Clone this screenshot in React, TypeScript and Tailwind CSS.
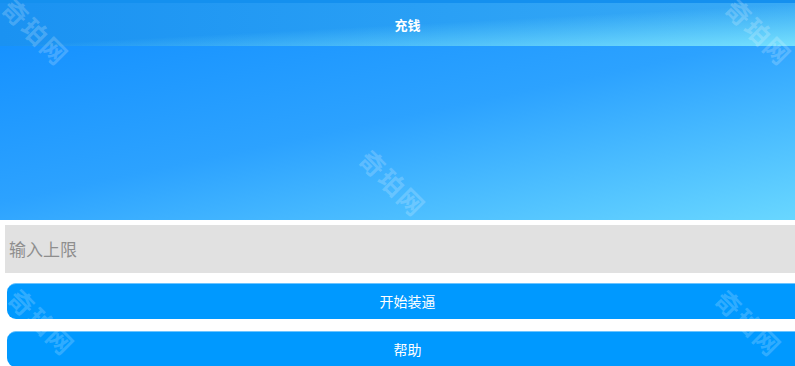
import React from 'react';

const cjk = "font-['Noto_Sans_CJK_SC','Noto_Sans',sans-serif]";

// faint diagonal watermark stamped over the screenshot
const Mark = ({ x, y }: { x: number; y: number }) => (
  <div
    className={`absolute pointer-events-none -translate-x-1/2 -translate-y-1/2 rotate-45 text-[25px] font-bold tracking-[2px] text-white/20 whitespace-nowrap ${cjk}`}
    style={{ left: x, top: y }}
  >
    奇珀网
  </div>
);

export default function App() {
  return (
    <div className={`relative w-full h-[366px] overflow-hidden bg-white ${cjk}`}>
      {/* page is a bit wider than the window, so the right edge is cropped */}
      <div className="w-[815px] flex flex-col">
        <header className="h-[46px] flex items-center justify-center border-t-[3px] border-[#1490ef] bg-[linear-gradient(to_bottom_right,rgba(130,232,255,0)_50%,rgba(130,235,255,0.85)_100%),linear-gradient(90deg,#1a92f2_0%,#2aa0f5_55%,#3aabf6_100%)]">
          <h1 className="text-[13px] font-bold text-white">充钱</h1>
        </header>

        <div className="h-[174px] bg-[linear-gradient(to_bottom_right,#1692ff_0%,#2ca2ff_45%,#6ad8ff_100%)]" />

        <div className="mt-[5px] ml-[5px] h-[48px] bg-[#e1e1e1] flex items-center pl-[4px]">
          <span className="text-[17px] text-[#8e8e8e]">输入上限</span>
        </div>

        <div className="flex flex-col gap-[12px] mt-[10px] mx-[7px]">
          <button className="h-[36px] rounded-[9px] bg-[#0099ff] border-t border-[#6cc4ff] text-[14px] text-white">
            开始装逼
          </button>
          <button className="h-[36px] rounded-[9px] bg-[#0099ff] border-t border-[#6cc4ff] text-[14px] text-white">
            帮助
          </button>
        </div>
      </div>

      <Mark x={36} y={32} />
      <Mark x={759} y={32} />
      <Mark x={393} y={183} />
      <Mark x={42} y={322} />
      <Mark x={749} y={323} />
    </div>
  );
}
